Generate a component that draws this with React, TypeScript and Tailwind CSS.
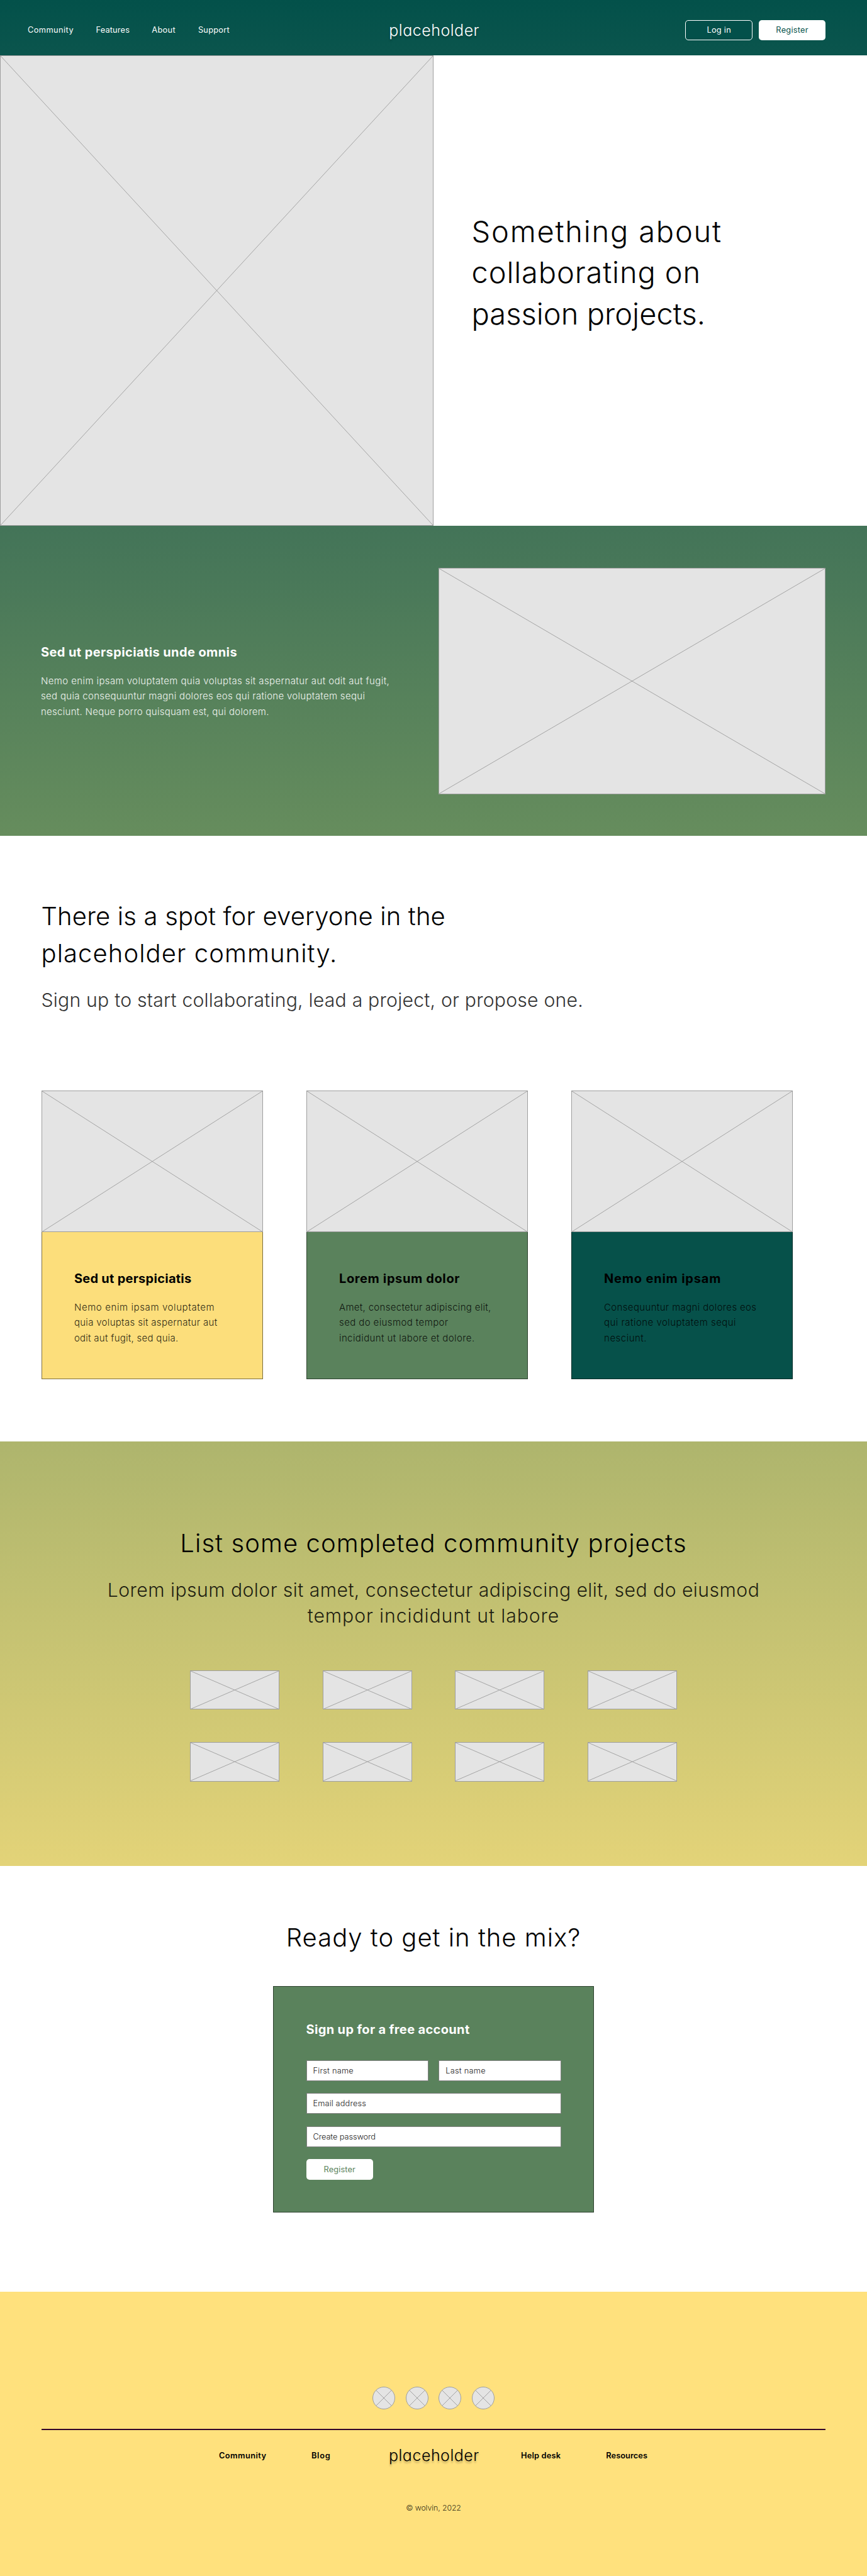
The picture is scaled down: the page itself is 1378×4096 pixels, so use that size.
import React from "react";

type Line = { text: string; track: string };

function Placeholder({ className = "" }: { className?: string }) {
  return (
    <div className={`overflow-hidden border border-[#9e9e9e] bg-[#e4e4e4] ${className}`}>
      <svg className="block h-full w-full" viewBox="0 0 100 100" preserveAspectRatio="none" fill="none">
        <path d="M0 0L100 100M100 0L0 100" stroke="#a4a4a4" strokeWidth="1" vectorEffect="non-scaling-stroke" />
      </svg>
    </div>
  );
}

function Lines({ lines }: { lines: Line[] }) {
  return (
    <>
      {lines.map((l) => (
        <span key={l.text} className={`block whitespace-nowrap ${l.track}`}>
          {l.text}
        </span>
      ))}
    </>
  );
}

function Logo({ className = "" }: { className?: string }) {
  return (
    <span
      className={`-mt-px block text-[25px] leading-[36px] font-light tracking-[0.5px] [font-feature-settings:'cv11'] [text-shadow:0_3px_3px_rgba(0,0,0,0.25)] ${className}`}
    >
      placeholder
    </span>
  );
}

const cards: { title: Line; body: Line[]; bg: string }[] = [
  {
    title: { text: "Sed ut perspiciatis", track: "tracking-[0.27px]" },
    bg: "bg-[#fcde7b] border-[#7e6f3e]",
    body: [
      { text: "Nemo enim ipsam voluptatem", track: "tracking-[0.6px]" },
      { text: "quia voluptas sit aspernatur aut", track: "tracking-[0.31px]" },
      { text: "odit aut fugit, sed quia.", track: "tracking-[0.27px]" },
    ],
  },
  {
    title: { text: "Lorem ipsum dolor", track: "tracking-[0.62px]" },
    bg: "bg-[#5a825c] border-[#2d412e]",
    body: [
      { text: "Amet, consectetur adipiscing elit,", track: "tracking-[0.31px]" },
      { text: "sed do eiusmod tempor", track: "tracking-[0.4px]" },
      { text: "incididunt ut labore et dolore.", track: "tracking-[0.4px]" },
    ],
  },
  {
    title: { text: "Nemo enim ipsam", track: "tracking-[0.79px]" },
    bg: "bg-[#06514a] border-[#032925]",
    body: [
      { text: "Consequuntur magni dolores eos", track: "tracking-[0.35px]" },
      { text: "qui ratione voluptatem sequi", track: "tracking-[0.46px]" },
      { text: "nesciunt.", track: "tracking-[0.49px]" },
    ],
  },
];

function Field({ text, track, className = "" }: Line & { className?: string }) {
  return (
    <div
      className={`flex h-[32.8px] items-center border border-[#808080] bg-white pl-[10px] text-[12.8px] font-light text-[#222] ${track} ${className}`}
    >
      {text}
    </div>
  );
}

export default function App() {
  return (
    <div className="h-[4096px] w-[1378px] overflow-hidden bg-white font-['Inter',sans-serif] text-black">
      <header className="flex h-[88px] items-center bg-linear-to-b from-[#03514a] to-[#0b554d] pt-2 pr-[65.6px] pl-[44px] text-white">
        <nav className="flex w-[574.3px] text-[12.8px]">
          <a className="w-[108.5px] tracking-[0.42px]">Community</a>
          <a className="w-[88.8px] tracking-[0.15px]">Features</a>
          <a className="w-[73.6px] tracking-[0.3px]">About</a>
          <a className="tracking-[0.25px]">Support</a>
        </nav>
        <Logo />
        <div className="ml-auto flex gap-[9.8px] text-[12.8px] tracking-[0.25px]">
          <button className="h-[32.8px] w-[106.6px] rounded-[5px] border border-white bg-[#03504a]">Log in</button>
          <button className="h-[32.8px] w-[106.6px] rounded-[5px] bg-white text-[#06514a]">Register</button>
        </div>
      </header>

      <section className="flex h-[748px]">
        <Placeholder className="w-[689px]" />
        <h1 className="pt-[246.5px] pl-[60.5px] text-[47px] leading-[65.6px] font-light">
          <Lines
            lines={[
              { text: "Something about", track: "tracking-[1.8px]" },
              { text: "collaborating on", track: "tracking-[0.88px]" },
              { text: "passion projects.", track: "tracking-[0.05px]" },
            ]}
          />
        </h1>
      </section>

      <section className="flex h-[492.5px] justify-between bg-linear-to-b from-[#437458] to-[#668d5d] pt-[66.5px] pr-[65.6px] pl-[65px] text-white">
        <div className="pt-[122.5px]">
          <h2 className="text-[20px] leading-6 font-bold tracking-[0.4px]">Sed ut perspiciatis unde omnis</h2>
          <p className="mt-[21.5px] text-[15px] leading-[24.6px] font-light text-white/90">
            <Lines
              lines={[
                {
                  text: "Nemo enim ipsam voluptatem quia voluptas sit aspernatur aut odit aut fugit,",
                  track: "tracking-[0.39px]",
                },
                {
                  text: "sed quia consequuntur magni dolores eos qui ratione voluptatem sequi",
                  track: "tracking-[0.31px]",
                },
                { text: "nesciunt. Neque porro quisquam est, qui dolorem.", track: "tracking-[0.28px]" },
              ]}
            />
          </p>
        </div>
        <Placeholder className="h-[360px] w-[615px]" />
      </section>

      <section className="h-[963.2px] px-[65.5px] pt-[98.4px]">
        <h2 className="text-[40px] leading-[59px] font-light">
          <Lines
            lines={[
              { text: "There is a spot for everyone in the", track: "tracking-[0.17px]" },
              { text: "placeholder community.", track: "tracking-[1.07px]" },
            ]}
          />
        </h2>
        <p className="mt-[25px] text-[30.2px] leading-[41px] font-light tracking-[0.21px] text-[#333]">
          Sign up to start collaborating, lead a project, or propose one.
        </p>
        <div className="mt-[123px] flex gap-[69.1px]">
          {cards.map((c) => (
            <article key={c.title.text} className="w-[352px]">
              <Placeholder className="h-[225.5px]" />
              <div className={`h-[233.5px] border border-t-0 pt-[62px] pl-[51.4px] ${c.bg}`}>
                <h3 className={`text-[20px] leading-6 font-bold ${c.title.track}`}>{c.title.text}</h3>
                <p className="mt-[21.5px] text-[15px] leading-[24.6px] font-light text-black/85">
                  <Lines lines={c.body} />
                </p>
              </div>
            </article>
          ))}
        </div>
      </section>

      <section className="flex h-[674.9px] flex-col items-center bg-linear-to-b from-[#aeb56d] to-[#e3d378] pt-[132px]">
        <h2 className="text-[40px] leading-[59px] font-light tracking-[1.08px]">
          List some completed community projects
        </h2>
        <p className="mt-[25px] text-center text-[30.2px] leading-[41px] font-light text-black/85">
          <Lines
            lines={[
              {
                text: "Lorem ipsum dolor sit amet, consectetur adipiscing elit, sed do eiusmod",
                track: "tracking-[0.43px]",
              },
              { text: "tempor incididunt ut labore", track: "tracking-[0.91px]" },
            ]}
          />
        </p>
        <div className="mt-[66px] grid grid-cols-4 gap-x-[68.6px] gap-y-[52.3px]">
          {Array.from({ length: 8 }, (_, i) => (
            <Placeholder key={i} className="h-[62.5px] w-[142px]" />
          ))}
        </div>
      </section>

      <section className="flex h-[677.2px] flex-col items-center pt-[84.4px]">
        <h2 className="text-[40px] leading-[59px] font-light tracking-[0.99px]">Ready to get in the mix?</h2>
        <form className="mt-[48.5px] h-[360px] w-[510px] border border-[#2d412e] bg-[#5a825c] px-[51.5px] pt-[55.4px]">
          <h3 className="text-[20px] leading-6 font-bold tracking-[0.35px] text-white">Sign up for a free account</h3>
          <div className="mt-[37px] flex flex-col gap-[19.7px]">
            <div className="grid grid-cols-2 gap-[16.4px]">
              <Field text="First name" track="tracking-[0.22px]" />
              <Field text="Last name" track="tracking-[0.25px]" />
            </div>
            <Field text="Email address" track="tracking-[0.12px]" />
            <Field text="Create password" track="tracking-[-0.1px]" />
            <button
              type="button"
              className="h-[32.8px] w-[106.6px] rounded-[5px] bg-white text-[12.8px] tracking-[0.1px] text-[#5a825c]"
            >
              Register
            </button>
          </div>
        </form>
      </section>

      <footer className="h-[452px] bg-[#ffe17d] px-[65.6px] pt-[151.7px]">
        <div className="flex justify-center gap-[16.6px]">
          {Array.from({ length: 4 }, (_, i) => (
            <Placeholder key={i} className="size-[36px] rounded-full" />
          ))}
        </div>
        <div className="mt-[30.2px] h-[2.5px] bg-[#33022a]" />
        <div className="mt-[22.5px] flex items-center pl-[282.4px] text-[12.8px] font-semibold">
          <a className="w-[147px] tracking-[0.42px]">Community</a>
          <a className="w-[123px] tracking-[0.7px]">Blog</a>
          <Logo className="w-[210px]" />
          <a className="w-[135.3px] tracking-[0.19px]">Help desk</a>
          <a className="tracking-[0.06px]">Resources</a>
        </div>
        <p className="mt-[56px] text-center text-[12.3px] leading-5 font-light tracking-[-0.08px] text-black/85">
          © wolvin, 2022
        </p>
      </footer>
    </div>
  );
}
